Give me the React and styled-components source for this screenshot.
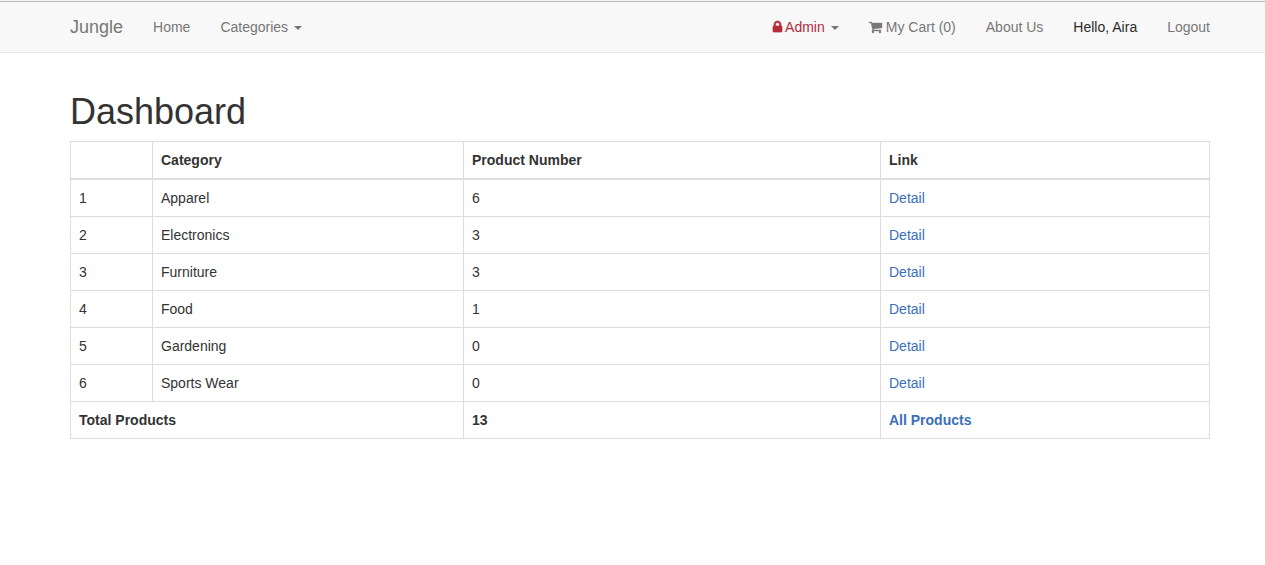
import React from 'react';
import styled, { createGlobalStyle } from 'styled-components';

const GlobalStyle = createGlobalStyle`
  *, *::before, *::after { box-sizing: border-box; }
  body {
    margin: 0;
    background: #fff;
    color: #333;
    font: 14px/20px "Liberation Sans", Arial, sans-serif;
  }
`;
const Navbar = styled.nav`
  height: 53px;
  padding-top: 2px;
  background: #f8f8f8;
  border-top: 1px solid #f2f2f2;
  border-bottom: 1px solid #e7e7e7;
  box-shadow: inset 0 1px 0 #bbb;
`;
const Container = styled.div`
  width: 1140px;
  margin-left: 70px;
`;
const NavInner = styled(Container)`
  display: flex;
  justify-content: space-between;
  height: 50px;
`;
const NavGroup = styled.div`
  display: flex;
`;
const Brand = styled.a`
  padding: 14px 15px 15px 0;
  font-size: 18px;
  color: #777;
`;
const NavLink = styled.a`
  padding: 14px 15px 15px;
  white-space: nowrap;
  color: ${(p) => p.$color || '#777'};
  &:last-child { padding-right: ${(p) => (p.$end ? 0 : '15px')}; }
`;
const Caret = styled.b`
  display: inline-block;
  margin-left: 6px;
  vertical-align: middle;
  color: #777;
  border-top: 4px solid;
  border-left: 4px solid transparent;
  border-right: 4px solid transparent;
`;
const IconSvg = styled.svg`
  width: ${(p) => p.$width}px;
  height: 14px;
  margin-right: ${(p) => p.$gap}px;
  vertical-align: -2px;
  fill: currentColor;
  stroke: currentColor;
  stroke-width: ${(p) => p.$stroke};
  overflow: visible;
`;
const Title = styled.h1`
  margin: 39px 0 9px;
  font-size: 36px;
  font-weight: 500;
  line-height: 40px;
`;
const Table = styled.table`
  width: 1140px;
  table-layout: fixed;
  border-collapse: collapse;
  border: 1px solid #ddd;
`;
const Cell = styled.td`
  padding: 8px;
  border: 1px solid #ddd;
  text-align: left;
  font-weight: ${(p) => (p.$bold ? 'bold' : 'normal')};
`;
const HeadCell = styled.th`
  padding: 8px;
  border: 1px solid #ddd;
  border-bottom-width: 2px;
  text-align: left;
`;
const Link = styled.a`
  color: #3b6fb9;
`;

const LockIcon = () => (
  <IconSvg viewBox="0 0 1152 1792" $width={9} $gap={3} $stroke={90}>
    <path d="M320 768h512v-192q0-106-75-181t-181-75-181 75-75 181v192zm832 96v576q0 40-28 68t-68 28h-960q-40 0-68-28t-28-68v-576q0-40 28-68t68-28h32v-192q0-184 132-316t316-132 316 132 132 316v192h32q40 0 68 28t28 68z" />
  </IconSvg>
);
const CartIcon = () => (
  <IconSvg viewBox="0 0 1664 1792" $width={13} $gap={4} $stroke={50}>
    <path d="M640 1536q0 52-38 90t-90 38-90-38-38-90 38-90 90-38 90 38 38 90zm896 0q0 52-38 90t-90 38-90-38-38-90 38-90 90-38 90 38 38 90zm128-1088v512q0 24-16.500 42.500t-40.500 21.500l-1044 122q13 60 13 70 0 16-24 64h920q26 0 45 19t19 45-19 45-45 19h-1024q-26 0-45-19t-19-45q0-11 8-31.500t16-36 21.500-40 15.500-29.500l-177-823h-204q-26 0-45-19t-19-45 19-45 45-19h256q16 0 28.500 6.500t19.500 15.500 13 24.500 8 26 5.500 29.500 4.500 26h1201q26 0 45 19t19 45z" />
  </IconSvg>
);

const rows = [
  ['Apparel', 6],
  ['Electronics', 3],
  ['Furniture', 3],
  ['Food', 1],
  ['Gardening', 0],
  ['Sports Wear', 0],
];

export default function App() {
  return (
    <>
      <GlobalStyle />
      <Navbar>
        <NavInner>
          <NavGroup>
            <Brand>Jungle</Brand>
            <NavLink>Home</NavLink>
            <NavLink>Categories<Caret /></NavLink>
          </NavGroup>
          <NavGroup>
            <NavLink $color="#b52b3a"><LockIcon />Admin<Caret /></NavLink>
            <NavLink><CartIcon />My Cart (0)</NavLink>
            <NavLink>About Us</NavLink>
            <NavLink $color="#2b2b2b">Hello, Aira</NavLink>
            <NavLink $end>Logout</NavLink>
          </NavGroup>
        </NavInner>
      </Navbar>
      <Container as="main">
        <Title>Dashboard</Title>
        <Table>
          <colgroup>
            <col style={{ width: 82 }} />
            <col style={{ width: 311 }} />
            <col style={{ width: 417 }} />
            <col />
          </colgroup>
          <thead>
            <tr>
              <HeadCell />
              <HeadCell>Category</HeadCell>
              <HeadCell>Product Number</HeadCell>
              <HeadCell>Link</HeadCell>
            </tr>
          </thead>
          <tbody>
            {rows.map(([name, count], i) => (
              <tr key={name}>
                <Cell>{i + 1}</Cell>
                <Cell>{name}</Cell>
                <Cell>{count}</Cell>
                <Cell><Link>Detail</Link></Cell>
              </tr>
            ))}
            <tr>
              <Cell $bold colSpan={2}>Total Products</Cell>
              <Cell $bold>13</Cell>
              <Cell $bold><Link>All Products</Link></Cell>
            </tr>
          </tbody>
        </Table>
      </Container>
    </>
  );
}
